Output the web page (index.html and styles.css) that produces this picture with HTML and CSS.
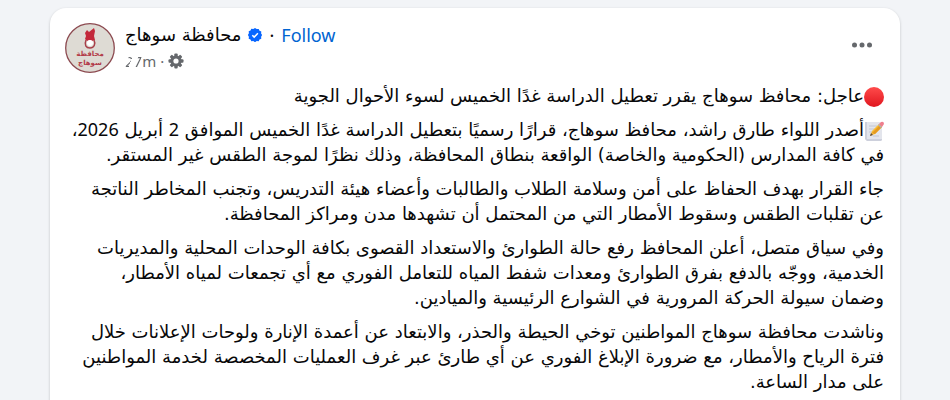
FILE: index.html
```html
<!DOCTYPE html>
<html lang="ar">
<head>
    <meta charset="utf-8">
    <title>محافظة سوهاج</title>
    <link rel="stylesheet" href="styles.css">
</head>
<body>
    <article class="post">
        <header class="post-header">
            <a class="avatar" href="#" aria-label="محافظة سوهاج">
                <svg viewBox="0 0 50 50" width="50" height="50">
                    <circle cx="25" cy="25" r="24.3" fill="#dedbd4" stroke="#8c4a50" stroke-width="1.3"/>
                    <path d="M20 10l2-3 2 2 5-4 1 3-1 5 1 4-3 1-2-1-3 1-2-2 1-3z" fill="#c3283a"/>
                    <path d="M21 17c-2 5 0 8 4 8s6-4 4-8" fill="none" stroke="#a8404a" stroke-width="1.5"/>
                    <circle cx="25" cy="20" r="3" fill="#fff"/>
                    <text x="25" y="33" class="logo-text">محافظة</text>
                    <text x="25" y="42" class="logo-text">سوهاج</text>
                </svg>
            </a>
            <div class="byline">
                <div class="name-row">
                    <a class="name" href="#">محافظة سوهاج</a>
                    <svg class="verified" viewBox="0 0 14 14" width="14" height="14">
                        <path d="M7 0l1.7 1.1 2-.2.8 1.8 1.8.8-.2 2L14.2 7l-1.1 1.7.2 2-1.8.8-.8 1.8-2-.2L7 14.2l-1.7-1.1-2 .2-.8-1.8-1.8-.8.2-2L-.2 7l1.1-1.7-.2-2 1.8-.8.8-1.8 2 .2z" fill="#0866ff"/>
                        <path d="M4.3 7.2l1.9 1.9 3.7-3.9" fill="none" stroke="#fff" stroke-width="1.5"/>
                    </svg>
                    <span>·</span>
                    <button class="follow" type="button">Follow</button>
                </div>
                <div class="meta-row">
                    <a class="time" href="#"><span class="faded">27</span>m</a>
                    <span>·</span>
                    <svg viewBox="0 0 16 16" width="16" height="16">
                        <g fill="#65686c">
                            <rect x="6.3" y="0.5" width="3.4" height="15" rx="1"/>
                            <rect x="6.3" y="0.5" width="3.4" height="15" rx="1" transform="rotate(45 8 8)"/>
                            <rect x="6.3" y="0.5" width="3.4" height="15" rx="1" transform="rotate(90 8 8)"/>
                            <rect x="6.3" y="0.5" width="3.4" height="15" rx="1" transform="rotate(135 8 8)"/>
                            <circle cx="8" cy="8" r="5.6"/>
                        </g>
                        <circle cx="8" cy="8" r="2.6" fill="#fff"/>
                    </svg>
                </div>
            </div>
            <button class="menu" type="button" aria-label="المزيد">
                <svg viewBox="0 0 20 20" width="20" height="20" fill="#65686c">
                    <circle cx="2.5" cy="10" r="2.5"/>
                    <circle cx="10" cy="10" r="2.5"/>
                    <circle cx="17.5" cy="10" r="2.5"/>
                </svg>
            </button>
        </header>

        <div class="message" dir="rtl">
            <p><svg class="emoji" viewBox="0 0 20 20" width="20" height="20">
                    <defs>
                        <linearGradient id="red" x1="0" y1="0" x2="0" y2="1">
                            <stop offset="0" stop-color="#ff4b4b"/>
                            <stop offset="1" stop-color="#e0161f"/>
                        </linearGradient>
                    </defs>
                    <circle cx="10" cy="10" r="10" fill="url(#red)"/>
                </svg>عاجل: محافظ سوهاج يقرر تعطيل الدراسة غدًا الخميس لسوء الأحوال الجوية</p>
            <p><svg class="emoji" viewBox="0 0 20 20" width="20" height="20">
                    <path d="M1 1h15l2 3v14l-1 2H3l-2-2z" fill="#e3e5ec"/>
                    <path d="M1 1h2v19l-2-2zM3 18h15v1l-1 1H3z" fill="#cdd0dc"/>
                    <path d="M5 5h8M5 8h6M5 11h4M9 15h6" stroke="#c3c6d3"/>
                    <path d="M6 15l2-5 7-7 3 3-7 7z" fill="#f9bd37"/>
                    <path d="M8 12l8-8 2 2-7 7z" fill="#e59a20"/>
                    <path d="M6 15l1-3 2 2z" fill="#5c4b44"/>
                    <path d="M14 4l1-1 3 3-1 1z" fill="#aab2bd"/>
                    <path d="M15 3l2-2q3-1 3 2l-2 3z" fill="#ef7f8e"/>
                </svg>أصدر اللواء طارق راشد، محافظ سوهاج، قرارًا رسميًا بتعطيل الدراسة غدًا الخميس الموافق <span class="num">2</span> أبريل <span class="num">2026</span>،<br>
                في كافة المدارس (الحكومية والخاصة) الواقعة بنطاق المحافظة، وذلك نظرًا لموجة الطقس غير المستقر.</p>
            <p>جاء القرار بهدف الحفاظ على أمن وسلامة الطلاب والطالبات وأعضاء هيئة التدريس، وتجنب المخاطر الناتجة<br>
                عن تقلبات الطقس وسقوط الأمطار التي من المحتمل أن تشهدها مدن ومراكز المحافظة.</p>
            <p>وفي سياق متصل، أعلن المحافظ رفع حالة الطوارئ والاستعداد القصوى بكافة الوحدات المحلية والمديريات<br>
                الخدمية، ووجّه بالدفع بفرق الطوارئ ومعدات شفط المياه للتعامل الفوري مع أي تجمعات لمياه الأمطار،<br>
                وضمان سيولة الحركة المرورية في الشوارع الرئيسية والميادين.</p>
            <p>وناشدت محافظة سوهاج المواطنين توخي الحيطة والحذر، والابتعاد عن أعمدة الإنارة ولوحات الإعلانات خلال<br>
                فترة الرياح والأمطار، مع ضرورة الإبلاغ الفوري عن أي طارئ عبر غرف العمليات المخصصة لخدمة المواطنين<br>
                على مدار الساعة.</p>
        </div>
    </article>
</body>
</html>
```

FILE: styles.css
```css
body {
    margin: 0;
    padding: 8px 50px 0;
    background: #f2f4f7;
    color: #080809;
    font-family: "Noto Sans", "DejaVu Sans", sans-serif;
}
a {
    color: inherit;
    text-decoration: none;
}
button {
    padding: 0;
    border: none;
    background: none;
    font: inherit;
    cursor: pointer;
}
svg {
    display: block;
    flex: none;
}
.post {
    padding: 15px 16px 6px 15px;
    border-radius: 16px 16px 0 0;
    background: #fff;
    box-shadow: 0 1px 3px rgba(0, 0, 0, 0.2);
}
.post-header {
    display: flex;
    align-items: flex-start;
    gap: 10px;
}
.logo-text {
    fill: #b23a48;
    font-family: "DejaVu Sans", sans-serif;
    font-size: 7px;
    font-weight: bold;
    text-anchor: middle;
}
.byline {
    flex: 1;
}
.name-row {
    display: flex;
    align-items: center;
    gap: 7px;
    height: 23px;
    font-size: 18px;
}
.name {
    font-family: "DejaVu Sans", sans-serif;
}
.follow {
    color: #0064d1;
}
.meta-row {
    display: flex;
    align-items: center;
    gap: 4px;
    height: 30px;
    color: #65686c;
    font-size: 15px;
}
/* digits only partly painted */
.faded {
    background: repeating-linear-gradient(110deg, transparent 0 5px, #65686c 6px 9px);
    -webkit-background-clip: text;
    background-clip: text;
    color: transparent;
}
.menu {
    padding: 12px;
}
.message {
    margin-top: 7px;
    font-family: "DejaVu Sans", sans-serif;
    font-size: 18px;
    line-height: 25px;
    white-space: nowrap;
}
.message p {
    margin: 0 0 9px;
}
.num {
    font-family: "Noto Sans", sans-serif;
}
.emoji {
    display: inline-block;
    vertical-align: -5px;
}
```
